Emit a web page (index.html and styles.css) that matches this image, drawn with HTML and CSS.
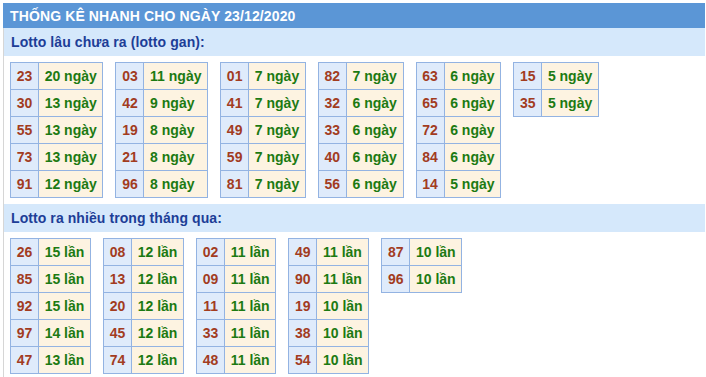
FILE: index.html
```html
<!DOCTYPE html>
<html>
<head>
<meta charset="utf-8">
<link rel="stylesheet" href="styles.css">
</head>
<body>
<div class="box">
  <div class="title">THỐNG KÊ NHANH CHO NGÀY 23/12/2020</div>
  <div class="content">
    <div class="sub">Lotto lâu chưa ra (lotto gan):</div>
    <div class="tables">
      <table><tr><td class="n">23</td><td class="v">20 ngày</td></tr><tr><td class="n">30</td><td class="v">13 ngày</td></tr><tr><td class="n">55</td><td class="v">13 ngày</td></tr><tr><td class="n">73</td><td class="v">13 ngày</td></tr><tr><td class="n">91</td><td class="v">12 ngày</td></tr></table>
      <table><tr><td class="n">03</td><td class="v">11 ngày</td></tr><tr><td class="n">42</td><td class="v">9 ngày</td></tr><tr><td class="n">19</td><td class="v">8 ngày</td></tr><tr><td class="n">21</td><td class="v">8 ngày</td></tr><tr><td class="n">96</td><td class="v">8 ngày</td></tr></table>
      <table><tr><td class="n">01</td><td class="v">7 ngày</td></tr><tr><td class="n">41</td><td class="v">7 ngày</td></tr><tr><td class="n">49</td><td class="v">7 ngày</td></tr><tr><td class="n">59</td><td class="v">7 ngày</td></tr><tr><td class="n">81</td><td class="v">7 ngày</td></tr></table>
      <table><tr><td class="n">82</td><td class="v">7 ngày</td></tr><tr><td class="n">32</td><td class="v">6 ngày</td></tr><tr><td class="n">33</td><td class="v">6 ngày</td></tr><tr><td class="n">40</td><td class="v">6 ngày</td></tr><tr><td class="n">56</td><td class="v">6 ngày</td></tr></table>
      <table><tr><td class="n">63</td><td class="v">6 ngày</td></tr><tr><td class="n">65</td><td class="v">6 ngày</td></tr><tr><td class="n">72</td><td class="v">6 ngày</td></tr><tr><td class="n">84</td><td class="v">6 ngày</td></tr><tr><td class="n">14</td><td class="v">5 ngày</td></tr></table>
      <table><tr><td class="n">15</td><td class="v">5 ngày</td></tr><tr><td class="n">35</td><td class="v">5 ngày</td></tr></table>
    </div>
    <div class="sub">Lotto ra nhiều trong tháng qua:</div>
    <div class="tables">
      <table><tr><td class="n">26</td><td class="v">15 lần</td></tr><tr><td class="n">85</td><td class="v">15 lần</td></tr><tr><td class="n">92</td><td class="v">15 lần</td></tr><tr><td class="n">97</td><td class="v">14 lần</td></tr><tr><td class="n">47</td><td class="v">13 lần</td></tr></table>
      <table><tr><td class="n">08</td><td class="v">12 lần</td></tr><tr><td class="n">13</td><td class="v">12 lần</td></tr><tr><td class="n">20</td><td class="v">12 lần</td></tr><tr><td class="n">45</td><td class="v">12 lần</td></tr><tr><td class="n">74</td><td class="v">12 lần</td></tr></table>
      <table><tr><td class="n">02</td><td class="v">11 lần</td></tr><tr><td class="n">09</td><td class="v">11 lần</td></tr><tr><td class="n">11</td><td class="v">11 lần</td></tr><tr><td class="n">33</td><td class="v">11 lần</td></tr><tr><td class="n">48</td><td class="v">11 lần</td></tr></table>
      <table><tr><td class="n">49</td><td class="v">11 lần</td></tr><tr><td class="n">90</td><td class="v">11 lần</td></tr><tr><td class="n">19</td><td class="v">10 lần</td></tr><tr><td class="n">38</td><td class="v">10 lần</td></tr><tr><td class="n">54</td><td class="v">10 lần</td></tr></table>
      <table><tr><td class="n">87</td><td class="v">10 lần</td></tr><tr><td class="n">96</td><td class="v">10 lần</td></tr></table>
    </div>
  </div>
</div>
</body>
</html>
```
FILE: styles.css
```css
body {
  margin: 0;
  background: #fff;
  font-family: "Liberation Sans", Arial, sans-serif;
}
.box {
  margin: 3px 1px 0 3px;
}
.title {
  height: 25px;
  line-height: 26px;
  background: #5b96d6;
  color: #fff;
  font-weight: bold;
  font-size: 14px;
  letter-spacing: 0.12px;
  padding-left: 7px;
}
.content {
  border-left: 1px solid #d6d6d6;
  padding-bottom: 2px;
}
.sub {
  height: 28px;
  line-height: 28px;
  background: #d5e8fb;
  color: #1d3e97;
  font-weight: bold;
  font-size: 14px;
  letter-spacing: 0.08px;
  padding-left: 7px;
}
.tables {
  display: flex;
  align-items: flex-start;
  padding: 6px 0;
}
table {
  border-collapse: collapse;
  margin: 0 6px;
}
td {
  border: 1px solid #93b3e2;
  height: 26px;
  padding: 0 5.7px;
  font-size: 14px;
  font-weight: bold;
  white-space: nowrap;
}
td.n {
  background: #dfebfb;
  color: #a23c1f;
  text-align: center;
}
td.v {
  background: #fdf3e1;
  color: #1c7a12;
}
```
